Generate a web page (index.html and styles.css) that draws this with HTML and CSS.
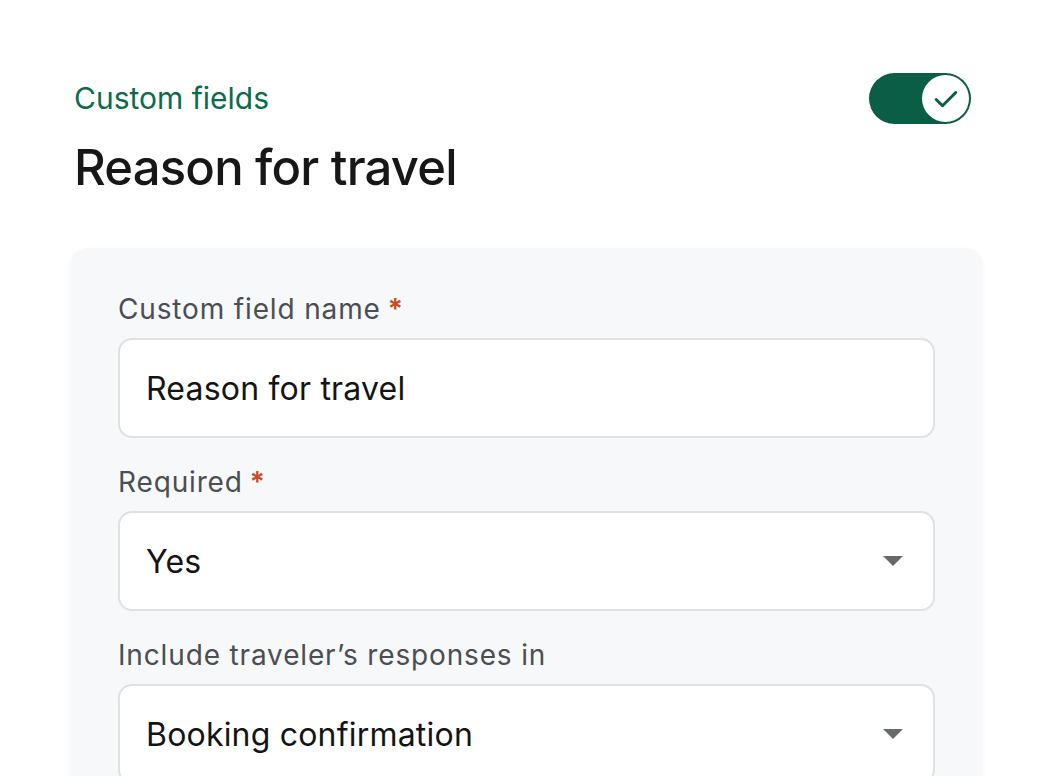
FILE: index.html
```html
<!DOCTYPE html>
<html lang="en">
<head>
<meta charset="utf-8">
<title>Reason for travel</title>
<link rel="stylesheet" href="styles.css">
</head>
<body>
<main class="page">
  <header class="head">
    <div class="titles">
      <div class="eyebrow">Custom fields</div>
      <h1 class="title">Reason for travel</h1>
    </div>
    <div class="toggle" role="switch" aria-checked="true">
      <span class="knob">
        <svg width="24" height="18" viewBox="0 0 24 18" fill="none" stroke="#0b5e46" stroke-width="3" stroke-linecap="round" stroke-linejoin="round"><path d="M2.2 9.5l6.3 6.2L21.8 2.5"/></svg>
      </span>
    </div>
  </header>
  <section class="card">
    <div class="field">
      <label class="label">Custom field name<span class="req">*</span></label>
      <div class="input">Reason for travel</div>
    </div>
    <div class="field">
      <label class="label">Required<span class="req">*</span></label>
      <div class="input select"><span>Yes</span><span class="caret"></span></div>
    </div>
    <div class="field">
      <label class="label">Include traveler’s responses in</label>
      <div class="input select"><span>Booking confirmation</span><span class="caret"></span></div>
    </div>
  </section>
</main>
</body>
</html>
```

FILE: styles.css
```css
* { box-sizing: border-box; }
html, body { margin: 0; padding: 0; background: #ffffff; }
body {
  font-family: Inter, "Noto Sans", "Liberation Sans", sans-serif;
  color: #161616;
  overflow: hidden;
  height: 776px;
}
.page {
  padding: 73px 68px 0 70px;
}
.head {
  display: flex;
  justify-content: space-between;
  align-items: flex-start;
  padding-left: 4px;
  padding-right: 12px;
}
.eyebrow {
  color: #0b6b4c;
  font-size: 30px;
  line-height: 51px;
}
.title {
  margin: 14px 0 0 0;
  font-size: 49px;
  font-weight: 500;
  line-height: 60px;
  letter-spacing: -0.8px;
  color: #171717;
}
.toggle {
  width: 102px;
  height: 51px;
  border-radius: 26px;
  background: #0b5e46;
  display: flex;
  align-items: center;
  justify-content: flex-end;
  padding-right: 2px;
}
.knob {
  width: 47px;
  height: 47px;
  border-radius: 50%;
  background: #ffffff;
  display: flex;
  align-items: center;
  justify-content: center;
}
.knob svg { margin-left: 1px; }
.card {
  margin-top: 50px;
  background: #f7f8f9;
  border-radius: 18px;
  box-shadow: 0 1px 4px rgba(0,0,0,0.04);
  padding: 45px 48px 60px 48px;
  display: flex;
  flex-direction: column;
  gap: 28px;
}
.field {
  display: flex;
  flex-direction: column;
  gap: 13px;
}
.label {
  font-size: 28px;
  line-height: 32px;
  letter-spacing: 0.85px;
  color: #4b4e52;
}
.req {
  color: #c84a1e;
  margin-left: 7px;
  font-weight: 600;
}
.input {
  height: 100px;
  background: #ffffff;
  border: 2px solid #e0e1e3;
  border-radius: 14px;
  padding: 0 26px;
  display: flex;
  align-items: center;
  font-size: 32px;
  letter-spacing: 0.2px;
  color: #141414;
}
.select {
  justify-content: space-between;
  padding-right: 30px;
}
.caret {
  width: 0;
  height: 0;
  border-left: 10px solid transparent;
  border-right: 10px solid transparent;
  border-top: 10px solid #666a6e;
}
```
